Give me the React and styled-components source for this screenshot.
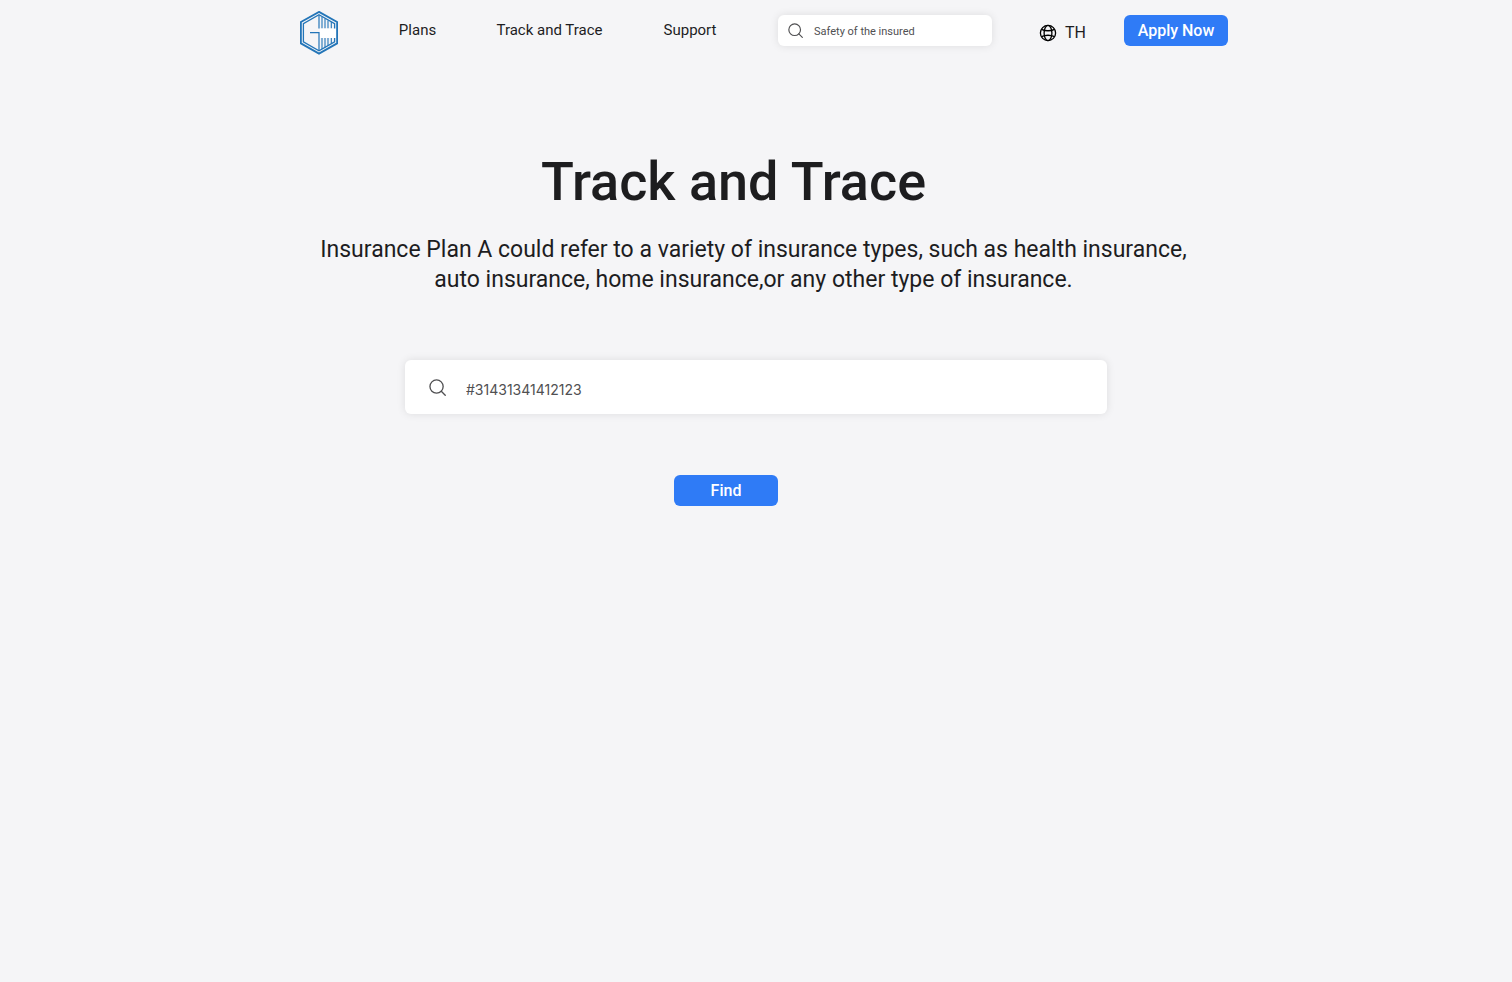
import React from 'react';
import styled, { createGlobalStyle } from 'styled-components';

const GlobalStyle = createGlobalStyle`
  *, *::before, *::after { box-sizing: border-box; }
  body {
    margin: 0;
    background: #f5f5f7;
    color: #1d1d1f;
    font-family: Roboto, "Liberation Sans", sans-serif;
  }
  button, input { font-family: inherit; }
`;

const Header = styled.header`
  display: flex;
  justify-content: center;
  align-items: flex-start;
  padding: 11px 0 0 16px;
`;

const HomeLink = styled.a`
  display: block;
  width: 38px;
  height: 44px;
  margin-right: 61px;
`;

const Nav = styled.nav`
  display: grid;
  grid-template-columns: 37px 105px 54px;
  column-gap: 61px;
  justify-items: center;
  margin: 4px 61px 0 0;
`;

const NavLink = styled.a`
  color: inherit;
  font-size: 15px;
  line-height: 31px;
  text-decoration: none;
  white-space: nowrap;
`;

const SearchField = styled.label`
  display: flex;
  align-items: center;
  gap: ${(p) => (p.$large ? '20px' : '11px')};
  width: ${(p) => (p.$large ? '702px' : '214px')};
  max-width: 100%;
  height: ${(p) => (p.$large ? '54px' : '31px')};
  padding: 0 10px 0 ${(p) => (p.$large ? '24px' : '10px')};
  margin-top: ${(p) => (p.$large ? '0' : '4px')};
  border-radius: 6px;
  background: #fff;
  box-shadow: 0 0 8px rgba(0, 0, 0, 0.1);
  color: #505052;

  svg { flex: none; }
`;

const SearchInput = styled.input`
  flex: 1;
  min-width: 0;
  height: 100%;
  padding: ${(p) => (p.$large ? '4px 0 0' : '1px 0 0')};
  border: 0;
  outline: 0;
  background: transparent;
  color: inherit;
  font-family: ${(p) => (p.$large ? 'Inter, sans-serif' : 'inherit')};
  font-size: ${(p) => (p.$large ? '14px' : '11px')};

  &::placeholder { color: inherit; opacity: 1; }
`;

const LanguageButton = styled.button`
  display: flex;
  align-items: center;
  gap: 8px;
  width: 46px;
  height: 31px;
  margin: 6px 39px 0 47px;
  padding: 0;
  border: 0;
  background: none;
  color: inherit;
  font-size: 16px;
  cursor: pointer;

  svg { flex: none; }
`;

const PrimaryButton = styled.button`
  width: 104px;
  height: 31px;
  padding: 0;
  border: 0;
  border-radius: 6px;
  background: #2f7bf6;
  color: #fff;
  font-size: 16px;
  font-weight: 500;
  cursor: pointer;
`;

const HeaderAction = styled.div`
  margin-top: 4px;
`;

const Main = styled.main`
  display: flex;
  flex-direction: column;
  align-items: center;
  padding: 92px 0 60px;
`;

const Title = styled.h1`
  margin: 0;
  padding-right: 45px;
  font-size: 54px;
  font-weight: 500;
  line-height: 70px;
`;

const Intro = styled.p`
  max-width: 960px;
  margin: 18px 0 65px;
  padding-right: 5px;
  font-size: 23px;
  line-height: 30px;
  text-align: center;
`;

const FormArea = styled.form`
  display: flex;
  flex-direction: column;
  align-items: center;
  max-width: 100%;
`;

const FormActions = styled.div`
  margin-top: 61px;
  padding-right: 60px;
`;

function Logo() {
  return (
    <svg width="38" height="44" viewBox="0 0 38 44" fill="none" stroke="#2375b8" aria-hidden="true">
      <path d="M19 .9 37.1 11V32.4L19 42.6.9 32.4V11Z" strokeWidth="1.8" />
      <path d="M19 3.8 34.6 12.6V30.9L19 39.8 3.4 30.9V12.6Z" strokeWidth="1.3" />
      <path d="M19 4V17.5" strokeWidth="1.2" />
      <path d="M22 6V17.5M25 7.5V17.5M28 9.5V17.5M31.3 11V17.5" strokeWidth="1.1" />
      <path d="M22 27V38M25 27V36.5M28 27V34.5M31.3 27V32.5" strokeWidth="1.1" />
      <path d="M10 21.7H19V39.5" strokeWidth="1.2" />
      <path d="M20 17.5H36V27H20Z" fill="#fff" stroke="none" />
    </svg>
  );
}

function SearchIcon({ size }) {
  return (
    <svg width={size} height={size} viewBox="0 0 18 18" fill="none" stroke="currentColor" strokeWidth="1.4" strokeLinecap="round" aria-hidden="true">
      <circle cx="8" cy="8" r="7" />
      <path d="m13 13 4.2 4.2" />
    </svg>
  );
}

function GlobeIcon() {
  return (
    <svg width="18" height="18" viewBox="0 0 18 18" fill="none" stroke="#000" strokeWidth="1.3" aria-hidden="true">
      <circle cx="9" cy="9" r="7.6" />
      <ellipse cx="9" cy="9" rx="3.9" ry="7.6" />
      <path d="M2.4 5.3Q9 8.2 15.6 5.3M2.4 12.7Q9 9.8 15.6 12.7" />
    </svg>
  );
}

export default function App() {
  return (
    <>
      <GlobalStyle />
      <Header>
        <HomeLink href="#" aria-label="Home"><Logo /></HomeLink>
        <Nav>
          <NavLink href="#plans">Plans</NavLink>
          <NavLink href="#track">Track and Trace</NavLink>
          <NavLink href="#support">Support</NavLink>
        </Nav>
        <SearchField>
          <SearchIcon size={15} />
          <SearchInput type="search" aria-label="Search" placeholder="Safety of the insured" />
        </SearchField>
        <LanguageButton type="button"><GlobeIcon />TH</LanguageButton>
        <HeaderAction>
          <PrimaryButton type="button">Apply Now</PrimaryButton>
        </HeaderAction>
      </Header>
      <Main>
        <Title>Track and Trace</Title>
        <Intro>
          Insurance Plan A could refer to a variety of insurance types, such as health insurance,
          <br />
          auto insurance, home insurance,or any other type of insurance.
        </Intro>
        <FormArea onSubmit={(e) => e.preventDefault()}>
          <SearchField $large>
            <SearchIcon size={17} />
            <SearchInput $large type="search" aria-label="Tracking number" placeholder="#31431341412123" />
          </SearchField>
          <FormActions>
            <PrimaryButton type="submit">Find</PrimaryButton>
          </FormActions>
        </FormArea>
      </Main>
    </>
  );
}
